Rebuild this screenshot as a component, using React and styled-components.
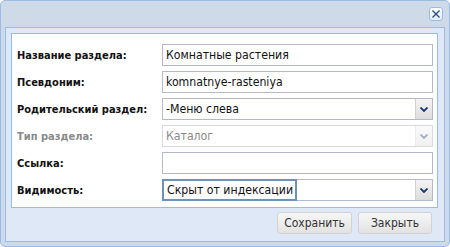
import React from 'react';
import styled, { createGlobalStyle } from 'styled-components';

const Global = createGlobalStyle`
  html, body { margin: 0; padding: 0; background: #fff; }
  * { box-sizing: border-box; }
`;

const Window = styled.div`
  width: 450px;
  height: 247px;
  background: #cfdae8;
  border: 1px solid #99bbe8;
  border-radius: 5px;
  display: flex;
  flex-direction: column;
  font-family: "DejaVu Sans Condensed", "DejaVu Sans", Verdana, sans-serif;
`;

const Header = styled.div`
  height: 26px;
  display: flex;
  justify-content: flex-end;
  align-items: flex-start;
  padding: 6px 6px 0 0;
`;

const CloseButton = styled.div`
  width: 14px;
  height: 14px;
  border: 1px solid #99bbe8;
  border-radius: 3px;
  background: linear-gradient(#ffffff, #e4ecf7);
  display: flex;
  align-items: center;
  justify-content: center;
`;

const Body = styled.div`
  margin: 0 4px 0 4px;
  height: 215px;
  background: #dfe8f6;
  border: 1px solid #99bbe8;
  padding: 5px 6px 0 5px;
  display: flex;
  flex-direction: column;
`;

const FormPanel = styled.div`
  width: 427px;
  height: 175px;
  background: #fff;
  border: 1px solid #99bbe8;
  padding: 10px 4px 0 5px;
  display: flex;
  flex-direction: column;
  gap: 5px;
`;

const Row = styled.div`
  display: flex;
  align-items: center;
  height: 22px;
`;

const Label = styled.div`
  width: 145px;
  font-size: 11px;
  font-weight: bold;
  color: ${({ disabled }) => (disabled ? '#8a8a8a' : '#111')};
`;

const Field = styled.div`
  flex: 1;
  height: 22px;
  display: flex;
  border: 1px solid ${({ disabled }) => (disabled ? '#d8dae2' : '#b5b8c8')};
  background: #fff;
`;

const Value = styled.div`
  flex: 1;
  display: flex;
  align-items: center;
  padding-left: 3px;
  font-size: 12.2px;
  color: ${({ disabled }) => (disabled ? '#8a8a8a' : '#111')};
  white-space: nowrap;
`;

const Focused = styled.span`
  display: flex;
  align-items: center;
  height: 22px;
  margin: -1px 0 0 -4px;
  padding: 0 2px 0 3px;
  border: 2px solid #7090b6;
`;

const Trigger = styled.div`
  width: 17px;
  background: linear-gradient(#f4f4f4, #dcdcdc);
  border-left: 1px solid #d0d0d0;
  display: flex;
  align-items: center;
  justify-content: center;
  opacity: ${({ disabled }) => (disabled ? 0.4 : 1)};
`;

const Footer = styled.div`
  display: flex;
  justify-content: flex-end;
  gap: 6px;
  padding: 4px 6px 0 0;
`;

const Button = styled.div`
  width: ${({ w }) => w}px;
  height: 22px;
  border: 1px solid #d2d2d2;
  border-radius: 3px;
  background: linear-gradient(#f7f7f7, #e2e2e2);
  display: flex;
  align-items: center;
  justify-content: center;
  font-size: 12px;
  color: #333;
`;

const Chevron = () => (
  <svg width="8" height="5" viewBox="0 0 8 5">
    <path d="M0.5 0.5 L4 4 L7.5 0.5" fill="none" stroke="#1a3766" strokeWidth="1.8" />
  </svg>
);

const rows = [
  { label: 'Название раздела:', value: 'Комнатные растения' },
  { label: 'Псевдоним:', value: 'komnatnye-rasteniya' },
  { label: 'Родительский раздел:', value: '-Меню слева', combo: true },
  { label: 'Тип раздела:', value: 'Каталог', combo: true, disabled: true },
  { label: 'Ссылка:', value: '' },
  { label: 'Видимость:', value: 'Скрыт от индексации', combo: true, focus: true },
];

export default function App() {
  return (
    <>
      <Global />
      <Window>
        <Header>
          <CloseButton>
            <svg width="10" height="10" viewBox="0 0 10 10">
              <path d="M1.5 1.5 L8.5 8.5 M8.5 1.5 L1.5 8.5" stroke="#2b4f86" strokeWidth="1.4" />
            </svg>
          </CloseButton>
        </Header>
        <Body>
          <FormPanel>
            {rows.map((r) => (
              <Row key={r.label}>
                <Label disabled={r.disabled}>{r.label}</Label>
                <Field disabled={r.disabled}>
                  <Value disabled={r.disabled}>
                    {r.focus ? <Focused>{r.value}</Focused> : r.value}
                  </Value>
                  {r.combo && (
                    <Trigger disabled={r.disabled}>
                      <Chevron />
                    </Trigger>
                  )}
                </Field>
              </Row>
            ))}
          </FormPanel>
          <Footer>
            <Button w={75}>Сохранить</Button>
            <Button w={74}>Закрыть</Button>
          </Footer>
        </Body>
      </Window>
    </>
  );
}
